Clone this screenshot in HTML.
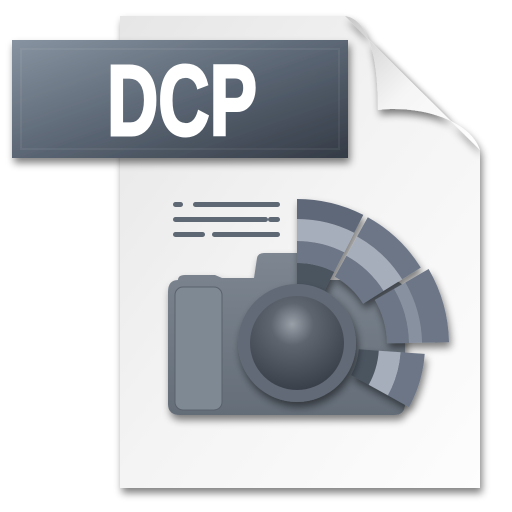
<!DOCTYPE html>
<html><head><style>
html,body{margin:0;padding:0;width:512px;height:512px;background:#fff;overflow:hidden}
</style></head><body>
<svg id="s" width="512" height="512" viewBox="0 0 512 512" xmlns="http://www.w3.org/2000/svg">
<defs>
<linearGradient id="pg" x1="0" y1="0" x2="1" y2="1"><stop offset="0" stop-color="#e6e6e6"/><stop offset="0.5" stop-color="#f4f4f4"/><stop offset="1" stop-color="#fdfdfd"/></linearGradient>
<linearGradient id="lg" x1="0" y1="0" x2="1" y2="1"><stop offset="0" stop-color="#8793a0"/><stop offset="0.5" stop-color="#5b6674"/><stop offset="1" stop-color="#343b46"/></linearGradient>
<linearGradient id="fg" x1="0" y1="0" x2="1" y2="1"><stop offset="0" stop-color="#c8c8c8"/><stop offset="0.5" stop-color="#f5f5f5"/><stop offset="1" stop-color="#ffffff"/></linearGradient>
<radialGradient id="lens" cx="0.45" cy="0.3" r="0.75"><stop offset="0" stop-color="#9aa0a8"/><stop offset="0.3" stop-color="#5e656f"/><stop offset="1" stop-color="#363c45"/></radialGradient>
<linearGradient id="cb" x1="0" y1="0" x2="0" y2="1"><stop offset="0" stop-color="#7d8691"/><stop offset="1" stop-color="#646d78"/></linearGradient>
<filter id="sh" x="-10%" y="-10%" width="130%" height="130%"><feGaussianBlur in="SourceAlpha" stdDeviation="4"/><feOffset dx="2" dy="5"/><feComponentTransfer><feFuncA type="linear" slope="0.5"/></feComponentTransfer><feMerge><feMergeNode/><feMergeNode in="SourceGraphic"/></feMerge></filter>
</defs>
<path d="M120 16 H345 L480 150 V488 H120 Z" fill="url(#pg)" filter="url(#sh)"/>
<path d="M345 16 C370 20 378 60 378 110 C420 105 470 120 480 150 Z" fill="url(#fg)" filter="url(#sh)"/>
<rect x="12" y="40" width="336" height="118" fill="url(#lg)" filter="url(#sh)"/>
<rect x="21" y="49" width="318" height="100" fill="none" stroke="#ffffff" stroke-opacity="0.06" stroke-width="2"/>
<text x="182" y="135" text-anchor="middle" font-family="Liberation Sans Narrow, Liberation Sans, sans-serif" font-weight="bold" font-size="100" fill="#fff" stroke="#fff" stroke-width="3" textLength="150" lengthAdjust="spacingAndGlyphs">DCP</text>
<g fill="#5e6774">
<rect x="173" y="202" width="10" height="5" rx="2.5"/><rect x="193" y="202" width="87" height="5" rx="2.5"/>
<rect x="173" y="217" width="95" height="5" rx="2.5"/><rect x="268" y="217" width="12" height="5" rx="2.5"/>
<rect x="173" y="232" width="32" height="5" rx="2.5"/><rect x="212" y="232" width="68" height="5" rx="2.5"/>
</g>
<path d="M178 280 Q178 275 185 275 H215 L222 278 H254 L257 258 Q258 253 264 253 H300 V280 H390 Q405 280 405 295 V404 Q405 415 394 415 H180 Q168 415 168 404 V292 Q168 280 178 280 Z" fill="url(#cb)" filter="url(#sh)"/>
<rect x="175" y="287" width="47" height="123" rx="8" fill="#7f8994" stroke="#5a626c" stroke-width="1"/>
<g id="fan" filter="url(#sh)"></g>
<circle cx="297" cy="343" r="59" fill="#626b77" filter="url(#sh)"/>
<circle cx="297" cy="343" r="47" fill="url(#lens)"/>
</svg>
<script>
var cx=297,cy=345,g=document.getElementById('fan');
function sec(a0,a1,r0,r1,c){var f=function(a,r){a=a*Math.PI/180;return (cx+r*Math.sin(a)).toFixed(1)+' '+(cy-r*Math.cos(a)).toFixed(1)};
var p=document.createElementNS('http://www.w3.org/2000/svg','path');
p.setAttribute('d','M'+f(a0,r0)+' L'+f(a0,r1)+' A'+r1+' '+r1+' 0 0 1 '+f(a1,r1)+' L'+f(a1,r0)+' A'+r0+' '+r0+' 0 0 0 '+f(a0,r0)+'Z');p.setAttribute('fill',c);g.appendChild(p);}
sec(0,27,60,82,'#4c5461');sec(0,27,82,104,'#6c7686');sec(0,27,104,126,'#a6adbb');sec(0,27,126,146,'#5f6878');
sec(29,58,78,102,'#6c7686');sec(29,58,102,124,'#a6adbb');sec(29,58,124,146,'#6c7686');
sec(60,89,90,112,'#6c7686');sec(60,89,112,125,'#8891a0');sec(60,89,125,152,'#6c7686');
sec(94,119,62,82,'#4c5461');sec(94,119,82,104,'#a6adbb');sec(94,119,104,128,'#6c7686');
</script>
</body></html>
